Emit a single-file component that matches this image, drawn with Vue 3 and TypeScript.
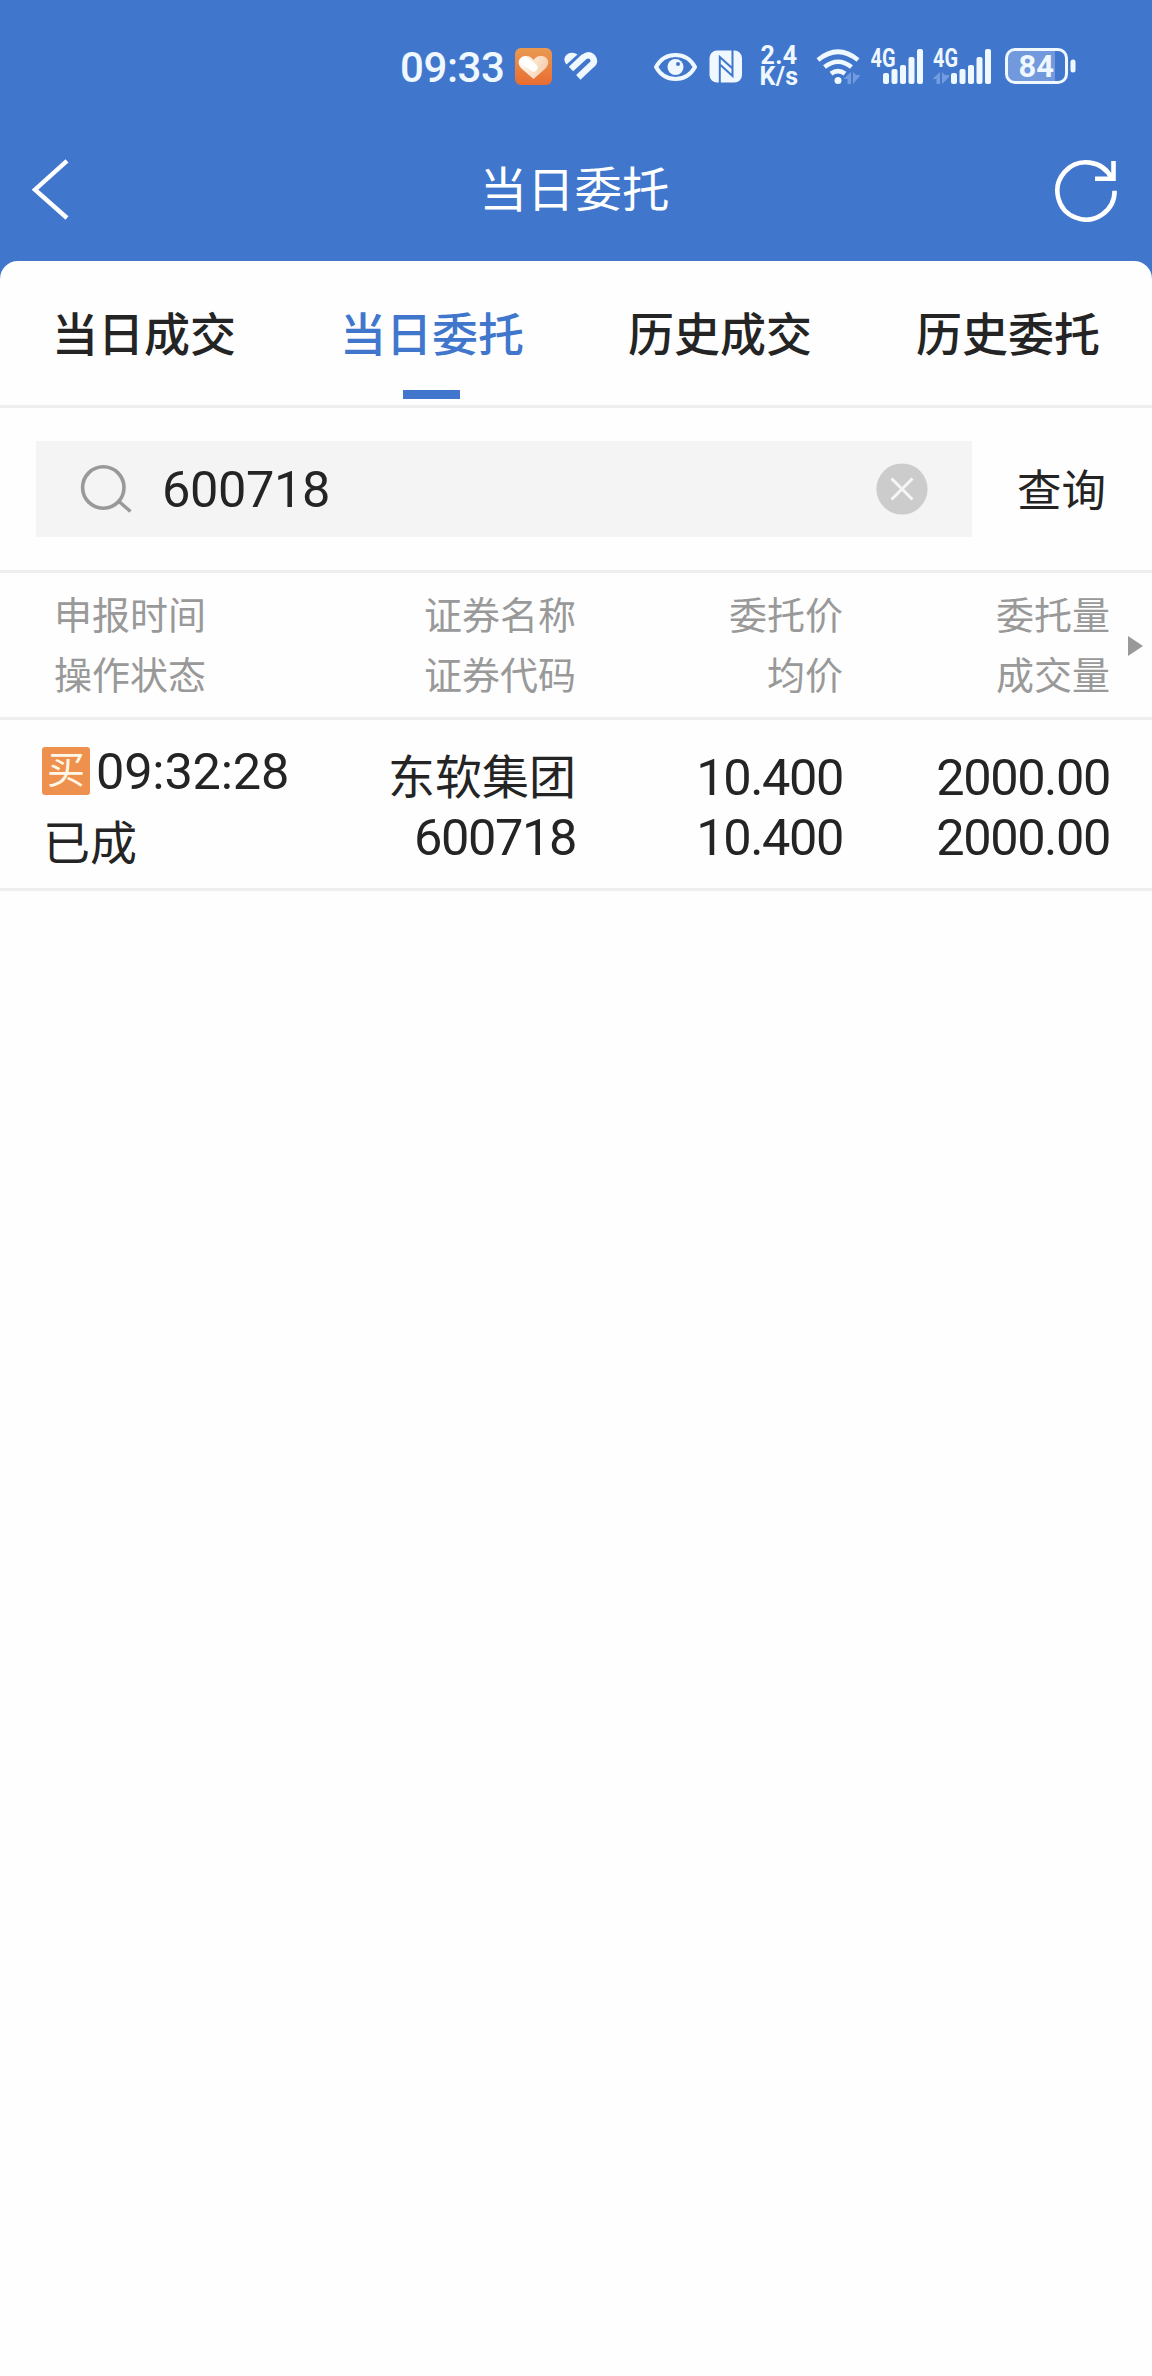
<script setup lang="ts">
import { ref } from 'vue'

interface Order {
  side: string
  time: string
  status: string
  name: string
  code: string
  price: string
  avgPrice: string
  quantity: string
  filled: string
}

const tabs: string[] = ['当日成交', '当日委托', '历史成交', '历史委托']
const activeTab = ref(1)
const keyword = ref('600718')

const columns: [string, string][] = [
  ['申报时间', '操作状态'],
  ['证券名称', '证券代码'],
  ['委托价', '均价'],
  ['委托量', '成交量'],
]

const orders: Order[] = [
  {
    side: '买',
    time: '09:32:28',
    status: '已成',
    name: '东软集团',
    code: '600718',
    price: '10.400',
    avgPrice: '10.400',
    quantity: '2000.00',
    filled: '2000.00',
  },
]
</script>

<template>
  <div class="screen">
    <header class="top">
      <div class="status">
        <span class="clock">09:33</span>
        <svg class="heart-app" width="38" height="40" viewBox="515 46 38 40">
          <defs>
            <linearGradient id="app-bg" x1="0" y1="0" x2="0" y2="1">
              <stop offset="0" stop-color="#e99a50" />
              <stop offset="1" stop-color="#e96c31" />
            </linearGradient>
            <linearGradient id="app-heart" x1="0" y1="0" x2="1" y2="0.3">
              <stop offset="0" stop-color="#fff" />
              <stop offset="1" stop-color="#f7cfac" />
            </linearGradient>
          </defs>
          <rect x="515" y="48" width="37" height="37" rx="6" fill="url(#app-bg)" />
          <path d="M533.500 79 L521.500 68.500 C515.500 62 520 56 526 56 C530 56 532 58 533.500 60 C535 58 537 56 541 56 C547 56 551.500 62 545.500 68.500 Z" fill="url(#app-heart)" />
          <path d="M524.500 61 L533.500 67.500" stroke="#fff" stroke-width="8" stroke-linecap="round" />
        </svg>
        <svg class="health" width="34" height="40" viewBox="564 46 34 40" fill="none" stroke="#eff7ff">
          <path d="M566.500 64.500 C561.500 58.500 566.500 52 573 52.800 Q576 53.300 577.500 54.500 Z" fill="#eff7ff" stroke="none" />
          <path d="M571 69 L583.500 57.300 Q589 53.500 592.300 57 Q595.800 61.500 591.500 65 L578.300 77.300" stroke-width="6.400" />
        </svg>
        <svg class="eye" width="44" height="40" viewBox="654 46 44 40">
          <path d="M656 67 C665 51 686 51 695 67 C686 83 665 83 656 67 Z" fill="none" stroke="#eff7ff" stroke-width="4" stroke-linejoin="round" />
          <circle cx="675.500" cy="67" r="8" fill="#eff7ff" />
          <circle cx="678" cy="64" r="2" fill="#4077cc" />
        </svg>
        <svg class="nfc" width="34" height="40" viewBox="709 46 34 40">
          <rect x="709.500" y="50.500" width="32.500" height="32" rx="7.500" fill="#eff7ff" />
          <path d="M719.800 83 V57 L732 68 M732.500 50 V76 L720.500 65" fill="none" stroke="#4077cc" stroke-width="2" />
        </svg>
        <div class="speed">2.4<br />K/s</div>
        <svg class="wifi" width="46" height="40" viewBox="816 46 46 40" fill="none" stroke="#eff7ff" stroke-width="4.600">
          <path d="M818 60 Q838 43.500 858 60" />
          <path d="M824.500 67 Q838 56.500 851.500 67" />
          <path d="M831 73.700 Q838 68.500 845 73.700" />
          <circle cx="838" cy="80.500" r="3.500" fill="#eff7ff" stroke="none" />
          <path d="M843.500 79 L851 72 V84 H847.500 V79 Z M853 72 L856 75 H860.500 L853 84 Z" fill="#739bdf" stroke="none" />
        </svg>
        <svg class="signal" width="53" height="40" viewBox="871 46 53 40" fill="#eff7ff">
          <text class="net" x="870.500" y="66.500" textLength="25" lengthAdjust="spacingAndGlyphs">4G</text>
          <rect x="883" y="73" width="6" height="11" rx="2" />
          <rect x="891.500" y="69" width="6" height="15" rx="2" />
          <rect x="900" y="65" width="6" height="19" rx="2" />
          <rect x="908.500" y="57" width="6" height="27" rx="2" />
          <rect x="917" y="49" width="6" height="35" rx="2" />
        </svg>
        <svg class="signal second" width="60" height="40" viewBox="932 46 60 40" fill="#eff7ff">
          <text class="net" x="933" y="66.500" textLength="25" lengthAdjust="spacingAndGlyphs">4G</text>
          <path d="M932.500 79 L940 72 V84 H936.500 V79 Z M942 72 L945 75 H949 L949 77 L942 84 Z" fill="#739bdf" />
          <rect x="951" y="73" width="6" height="11" rx="2" />
          <rect x="959.500" y="69" width="6" height="15" rx="2" />
          <rect x="968" y="65" width="6" height="19" rx="2" />
          <rect x="976.500" y="57" width="6" height="27" rx="2" />
          <rect x="985" y="49" width="6" height="35" rx="2" />
        </svg>
        <svg class="battery" width="72" height="40" viewBox="1005 46 72 40">
          <path d="M1015 51 H1055 V81 H1015 Q1008 81 1008 74 V58 Q1008 51 1015 51 Z" fill="#7199dc" />
          <rect x="1006.500" y="49.500" width="60" height="33" rx="8.500" fill="none" stroke="#eff7ff" stroke-width="3" />
          <rect x="1070.500" y="59.500" width="5" height="13" rx="2.500" fill="#eff7ff" />
          <text class="level" x="1018.500" y="77" textLength="35.500" lengthAdjust="spacingAndGlyphs">84</text>
        </svg>
      </div>
      <nav class="nav">
        <svg class="back" width="40" height="64" viewBox="31 158 40 64" fill="none" stroke="#fff" stroke-width="4.400">
          <path d="M67 160.800 L35 189.700 L67 218" />
        </svg>
        <h1>当日委托</h1>
        <svg class="refresh" width="64" height="64" viewBox="1054 158 64 64" fill="none" stroke="#fff" stroke-width="4.600">
          <path d="M1111.500 178 A28.600 28.600 0 1 0 1114.600 190.700" />
          <path d="M1113.500 161 V178.800 H1095" />
        </svg>
      </nav>
    </header>

    <main class="sheet">
      <div class="tabs">
        <button
          v-for="(tab, i) in tabs"
          :key="tab"
          class="tab"
          :class="{ active: i === activeTab }"
          @click="activeTab = i"
        >{{ tab }}</button>
      </div>

      <div class="search">
        <div class="field">
          <svg class="glass" width="54" height="52" viewBox="79 463 54 52" fill="none" stroke="#999">
            <circle cx="103.300" cy="487.500" r="20.700" stroke-width="3.600" />
            <path d="M119 501.500 L130.500 511.500" stroke-width="3.400" />
          </svg>
          <span class="keyword">{{ keyword }}</span>
          <svg class="clear" width="52" height="52" viewBox="0 0 52 52" @click="keyword = ''">
            <circle cx="26" cy="26" r="25.600" fill="#ccc" />
            <path d="M15.500 15.500 L36.500 36.500 M36.500 15.500 L15.500 36.500" stroke="#f6f6f6" stroke-width="3" />
          </svg>
        </div>
        <span class="query">查询</span>
      </div>

      <div class="grid head">
        <div v-for="col in columns" :key="col[0]" class="cell">
          <span>{{ col[0] }}</span>
          <span>{{ col[1] }}</span>
        </div>
        <svg class="more" width="15" height="20" viewBox="0 0 15 20"><path d="M0 0 L15 10 L0 20 Z" fill="#999" /></svg>
      </div>

      <div v-for="order in orders" :key="order.time" class="grid row">
        <div class="cell">
          <span class="when"><i class="side">{{ order.side }}</i>{{ order.time }}</span>
          <span class="state">{{ order.status }}</span>
        </div>
        <div class="cell">
          <span class="name">{{ order.name }}</span>
          <span>{{ order.code }}</span>
        </div>
        <div class="cell">
          <span>{{ order.price }}</span>
          <span>{{ order.avgPrice }}</span>
        </div>
        <div class="cell">
          <span>{{ order.quantity }}</span>
          <span>{{ order.filled }}</span>
        </div>
      </div>
    </main>
  </div>
</template>

<style>
body {
  margin: 0;
  background: #fefefe;
}
</style>

<style scoped>
.screen {
  width: 1152px;
  min-height: 2376px;
  background: #4077cc;
  font-family: Roboto, 'Noto Sans CJK SC', sans-serif;
  color: #242424;
}
svg {
  display: block;
  flex: none;
}
.top {
  height: 261px;
  color: #fff;
}
.status {
  display: flex;
  height: 40px;
  padding: 46px 0 33px 400px;
  color: #eff7ff;
}
.clock {
  width: 115px;
  font-size: 42px;
  font-weight: 500;
  line-height: 43px;
  letter-spacing: -0.4px;
}
.health { margin-left: 11px; }
.eye { margin-left: 56px; }
.nfc { margin-left: 11px; }
.speed {
  width: 46px;
  margin-left: 13px;
  font-size: 25px;
  font-weight: 700;
  line-height: 20.500px;
  letter-spacing: 0.3px;
  text-align: center;
}
.wifi { margin-left: 14px; }
.signal { margin-left: 9px; }
.second { margin-left: 8px; }
.battery { margin-left: 13px; }
.net {
  font-size: 25px;
  font-weight: 700;
}
.level {
  font-size: 32px;
  font-weight: 700;
  fill: #eff7ff;
}
.nav {
  display: flex;
  align-items: center;
  justify-content: space-between;
  height: 142px;
  padding: 0 34px 0 31px;
}
.nav h1 {
  margin: 0 0 0 24px;
  padding-top: 2px;
  font-size: 47.500px;
  font-weight: 400;
  line-height: 72px;
}
.sheet {
  min-height: 2115px;
  border-radius: 18px 18px 0 0;
  background: #fefefe;
}
.tabs {
  display: flex;
  height: 144px;
  border-bottom: 3px solid #eee;
}
.tab {
  position: relative;
  flex: 1;
  padding: 0 0 4px;
  border: 0;
  background: none;
  font: 500 46px/70px 'Noto Sans CJK SC', sans-serif;
  color: #242424;
}
.tab.active { color: #4077cc; }
.tab.active::after {
  content: '';
  position: absolute;
  bottom: 6px;
  left: 115px;
  width: 57px;
  height: 9px;
  background: #4077cc;
}
.search {
  display: flex;
  align-items: center;
  height: 162px;
  padding: 0 0 0 36px;
  border-bottom: 3px solid #eee;
}
.field {
  display: flex;
  align-items: center;
  box-sizing: border-box;
  width: 936px;
  height: 96px;
  padding: 0 44px 0 43px;
  background: #f4f4f4;
}
.keyword {
  flex: 1;
  margin-left: 29px;
  font-size: 50.500px;
  letter-spacing: -0.4px;
}
.query {
  margin-left: 45px;
  padding-top: 6px;
  font-size: 44.500px;
  line-height: 60px;
}
.grid {
  position: relative;
  display: grid;
  grid-template-columns: 309px 267px 267px 267px;
  align-items: center;
  border-bottom: 3px solid #eee;
}
.cell {
  display: flex;
  flex-direction: column;
  align-items: flex-end;
  line-height: 60px;
}
.cell:first-child { align-items: flex-start; }
.head {
  box-sizing: border-box;
  height: 147px;
  padding-top: 2px;
  font-size: 38px;
  color: #999;
}
.head .cell:first-child { padding-left: 54px; }
.more {
  position: absolute;
  top: 63px;
  right: 9px;
}
.row {
  box-sizing: border-box;
  height: 171px;
  padding-top: 7px;
  font-size: 50.500px;
  letter-spacing: -1.400px;
}
.row .cell:first-child {
  padding-left: 42px;
  line-height: 72px;
}
.when {
  display: flex;
  align-items: center;
  letter-spacing: -0.200px;
}
.side {
  width: 48px;
  height: 48px;
  margin: 0 6px 2px 0;
  border-radius: 3px;
  background: #ee914e;
  color: #fff8e8;
  font-size: 38px;
  font-style: normal;
  line-height: 47px;
  letter-spacing: 0;
  text-align: center;
}
.state, .name {
  font-size: 47px;
  letter-spacing: 0;
}
.state { margin-left: 1px; }
</style>
